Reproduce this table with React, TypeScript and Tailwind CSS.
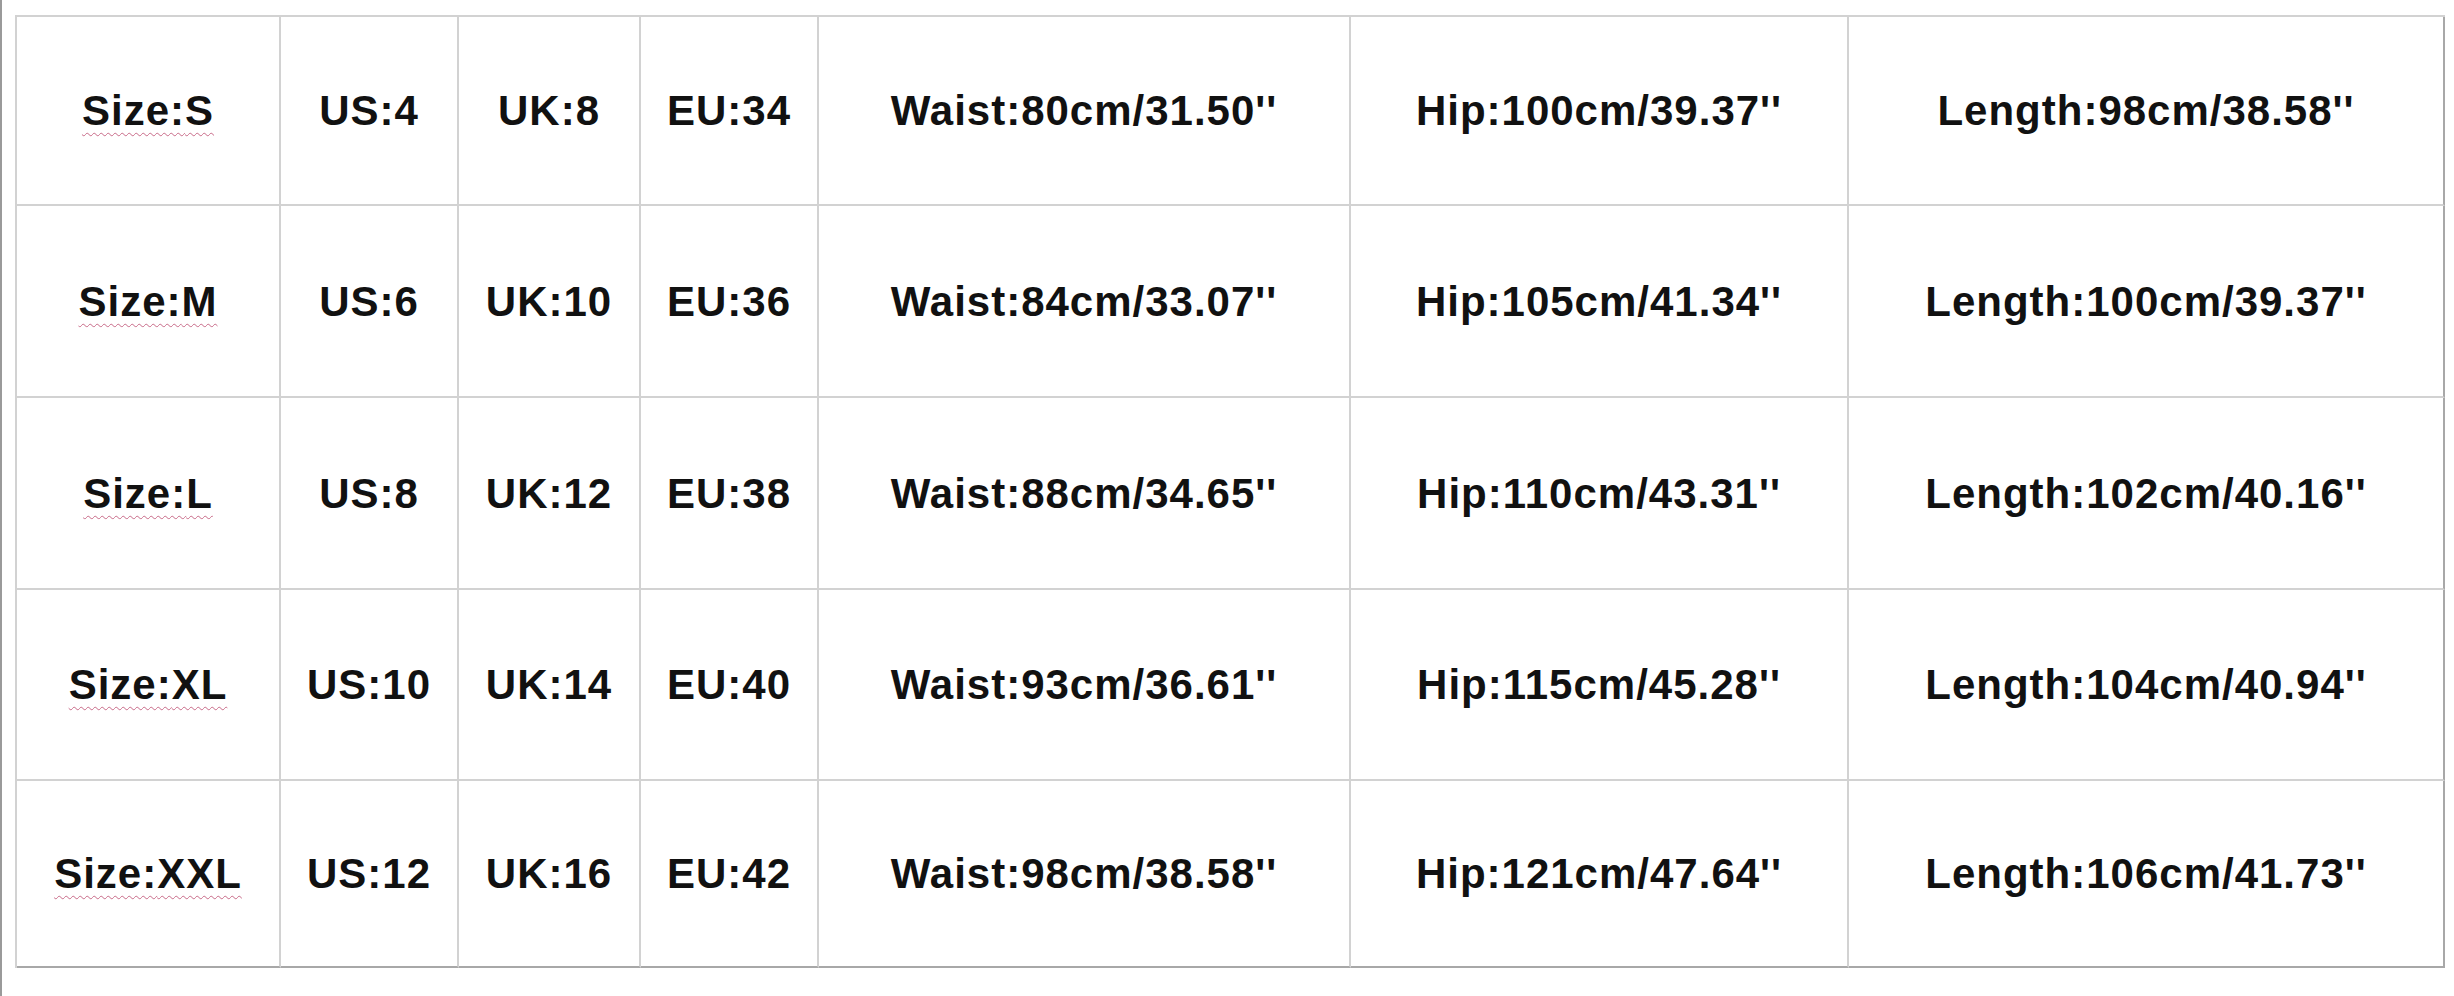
const rows = [
  ['S', 'US:4', 'UK:8', 'EU:34', 'Waist:80cm/31.50\'\'', 'Hip:100cm/39.37\'\'', 'Length:98cm/38.58\'\''],
  ['M', 'US:6', 'UK:10', 'EU:36', 'Waist:84cm/33.07\'\'', 'Hip:105cm/41.34\'\'', 'Length:100cm/39.37\'\''],
  ['L', 'US:8', 'UK:12', 'EU:38', 'Waist:88cm/34.65\'\'', 'Hip:110cm/43.31\'\'', 'Length:102cm/40.16\'\''],
  ['XL', 'US:10', 'UK:14', 'EU:40', 'Waist:93cm/36.61\'\'', 'Hip:115cm/45.28\'\'', 'Length:104cm/40.94\'\''],
  ['XXL', 'US:12', 'UK:16', 'EU:42', 'Waist:98cm/38.58\'\'', 'Hip:121cm/47.64\'\'', 'Length:106cm/41.73\'\''],
];

export default function App() {
  return (
    <div className="w-full h-[996px] bg-white border-l-2 border-[#9a9a9a] overflow-hidden">
      <div
        className="ml-[13px] mt-[15px] w-[2430px] grid grid-cols-[264px_178px_182px_178px_532px_498px_596px] grid-rows-[189px_192px_192px_191px_187px] border-l-2 border-t-2 border-[#d2d2d2] text-[#111] font-bold text-[42px] tracking-[1px]"
        style={{ fontFamily: '"Liberation Sans", Arial, sans-serif' }}
      >
        {rows.map((row, r) =>
          row.map((cell, c) => {
            const lastCol = c === row.length - 1;
            const lastRow = r === rows.length - 1;
            return (
              <div
                key={`${r}-${c}`}
                className={`flex items-center justify-center border-r-2 border-b-2 ${
                  lastCol ? 'border-r-[#a8a8a8]' : 'border-r-[#d2d2d2]'
                } ${lastRow ? 'border-b-[#a8a8a8]' : 'border-b-[#d2d2d2]'}`}
              >
                {c === 0 ? (
                  <span className="underline decoration-wavy decoration-[#c86a88] decoration-1 underline-offset-[7px]">
                    Size:{cell}
                  </span>
                ) : (
                  <span>{cell}</span>
                )}
              </div>
            );
          })
        )}
      </div>
    </div>
  );
}
